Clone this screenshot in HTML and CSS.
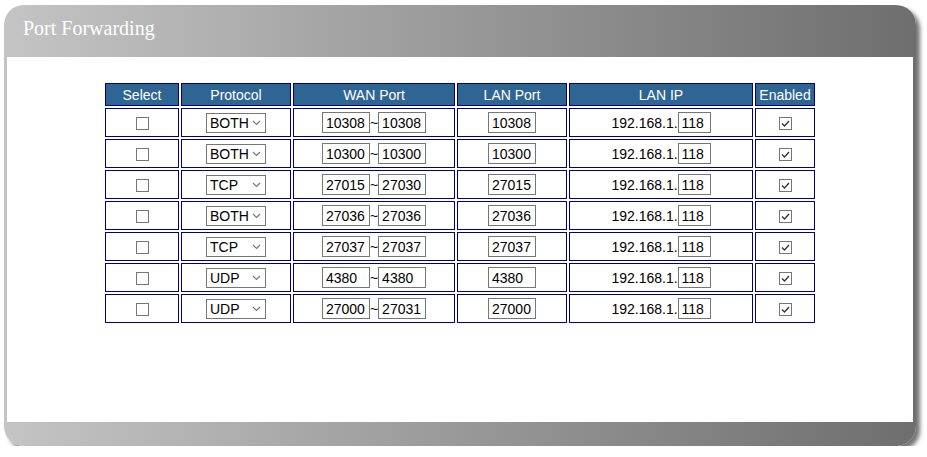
FILE: index.html
```html
<!DOCTYPE html>
<html>
<head>
    <title>Port Forwarding</title>
    <link rel="stylesheet" href="styles.css">
</head>
<body>
    <div class="panel">
        <div class="panel-head">Port Forwarding</div>
        <div class="panel-body">
            <table class="pf-table">
                <tr>
                    <th class="c-sel">Select</th>
                    <th class="c-proto">Protocol</th>
                    <th class="c-wan">WAN Port</th>
                    <th class="c-lan">LAN Port</th>
                    <th class="c-ip">LAN IP</th>
                    <th class="c-en">Enabled</th>
                </tr>
                <tr>
                    <td><span class="chk"></span></td>
                    <td><span class="sel"><select class="proto"><option>BOTH</option><option>TCP</option><option>UDP</option></select><svg class="arrow" width="9" height="6" viewBox="0 0 9 6"><path d="M1 1 L4.5 4.5 L8 1" fill="none" stroke="#777" stroke-width="1.2"/></svg></span></td>
                    <td><input class="port" value="10308">~<input class="port" value="10308"></td>
                    <td><input class="port" value="10308"></td>
                    <td>192.168.1.<input class="octet" value="118"></td>
                    <td><span class="chk"><svg width="11" height="11" viewBox="0 0 11 11"><path d="M2 5.5 L4.5 8 L9 3" fill="none" stroke="#333" stroke-width="1.3"/></svg></span></td>
                </tr>
                <tr>
                    <td><span class="chk"></span></td>
                    <td><span class="sel"><select class="proto"><option>BOTH</option><option>TCP</option><option>UDP</option></select><svg class="arrow" width="9" height="6" viewBox="0 0 9 6"><path d="M1 1 L4.5 4.5 L8 1" fill="none" stroke="#777" stroke-width="1.2"/></svg></span></td>
                    <td><input class="port" value="10300">~<input class="port" value="10300"></td>
                    <td><input class="port" value="10300"></td>
                    <td>192.168.1.<input class="octet" value="118"></td>
                    <td><span class="chk"><svg width="11" height="11" viewBox="0 0 11 11"><path d="M2 5.5 L4.5 8 L9 3" fill="none" stroke="#333" stroke-width="1.3"/></svg></span></td>
                </tr>
                <tr>
                    <td><span class="chk"></span></td>
                    <td><span class="sel"><select class="proto"><option>TCP</option><option>BOTH</option><option>UDP</option></select><svg class="arrow" width="9" height="6" viewBox="0 0 9 6"><path d="M1 1 L4.5 4.5 L8 1" fill="none" stroke="#777" stroke-width="1.2"/></svg></span></td>
                    <td><input class="port" value="27015">~<input class="port" value="27030"></td>
                    <td><input class="port" value="27015"></td>
                    <td>192.168.1.<input class="octet" value="118"></td>
                    <td><span class="chk"><svg width="11" height="11" viewBox="0 0 11 11"><path d="M2 5.5 L4.5 8 L9 3" fill="none" stroke="#333" stroke-width="1.3"/></svg></span></td>
                </tr>
                <tr>
                    <td><span class="chk"></span></td>
                    <td><span class="sel"><select class="proto"><option>BOTH</option><option>TCP</option><option>UDP</option></select><svg class="arrow" width="9" height="6" viewBox="0 0 9 6"><path d="M1 1 L4.5 4.5 L8 1" fill="none" stroke="#777" stroke-width="1.2"/></svg></span></td>
                    <td><input class="port" value="27036">~<input class="port" value="27036"></td>
                    <td><input class="port" value="27036"></td>
                    <td>192.168.1.<input class="octet" value="118"></td>
                    <td><span class="chk"><svg width="11" height="11" viewBox="0 0 11 11"><path d="M2 5.5 L4.5 8 L9 3" fill="none" stroke="#333" stroke-width="1.3"/></svg></span></td>
                </tr>
                <tr>
                    <td><span class="chk"></span></td>
                    <td><span class="sel"><select class="proto"><option>TCP</option><option>BOTH</option><option>UDP</option></select><svg class="arrow" width="9" height="6" viewBox="0 0 9 6"><path d="M1 1 L4.5 4.5 L8 1" fill="none" stroke="#777" stroke-width="1.2"/></svg></span></td>
                    <td><input class="port" value="27037">~<input class="port" value="27037"></td>
                    <td><input class="port" value="27037"></td>
                    <td>192.168.1.<input class="octet" value="118"></td>
                    <td><span class="chk"><svg width="11" height="11" viewBox="0 0 11 11"><path d="M2 5.5 L4.5 8 L9 3" fill="none" stroke="#333" stroke-width="1.3"/></svg></span></td>
                </tr>
                <tr>
                    <td><span class="chk"></span></td>
                    <td><span class="sel"><select class="proto"><option>UDP</option><option>BOTH</option><option>TCP</option></select><svg class="arrow" width="9" height="6" viewBox="0 0 9 6"><path d="M1 1 L4.5 4.5 L8 1" fill="none" stroke="#777" stroke-width="1.2"/></svg></span></td>
                    <td><input class="port" value="4380">~<input class="port" value="4380"></td>
                    <td><input class="port" value="4380"></td>
                    <td>192.168.1.<input class="octet" value="118"></td>
                    <td><span class="chk"><svg width="11" height="11" viewBox="0 0 11 11"><path d="M2 5.5 L4.5 8 L9 3" fill="none" stroke="#333" stroke-width="1.3"/></svg></span></td>
                </tr>
                <tr>
                    <td><span class="chk"></span></td>
                    <td><span class="sel"><select class="proto"><option>UDP</option><option>BOTH</option><option>TCP</option></select><svg class="arrow" width="9" height="6" viewBox="0 0 9 6"><path d="M1 1 L4.5 4.5 L8 1" fill="none" stroke="#777" stroke-width="1.2"/></svg></span></td>
                    <td><input class="port" value="27000">~<input class="port" value="27031"></td>
                    <td><input class="port" value="27000"></td>
                    <td>192.168.1.<input class="octet" value="118"></td>
                    <td><span class="chk"><svg width="11" height="11" viewBox="0 0 11 11"><path d="M2 5.5 L4.5 8 L9 3" fill="none" stroke="#333" stroke-width="1.3"/></svg></span></td>
                </tr>
            </table>
        </div>
        <div class="panel-foot"></div>
    </div>
</body>
</html>
```

FILE: styles.css
```css
body { margin: 0; background: #fff; font-family: "Liberation Sans", Arial, sans-serif; }
.panel { margin: 5px 0 0 4px; width: 912px; border-radius: 20px; background: linear-gradient(to right, #c4c4c4, #6e6e6e); box-shadow: 4px 4px 4px rgba(0,0,0,0.55); overflow: hidden; }
.panel-head { height: 52px; box-sizing: border-box; padding: 11px 0 0 19px; font-family: "Liberation Serif", "Times New Roman", serif; font-size: 20px; line-height: 24px; color: #fff; }
.panel-body { margin: 0 3px; height: 365px; background: #fff; padding-top: 24px; box-sizing: border-box; }
.panel-foot { height: 24px; }

.pf-table { margin: 0 auto; border-collapse: separate; border-spacing: 2px; table-layout: fixed; font-size: 14px; }
.pf-table th, .pf-table td { border: 1px solid #000080; padding: 0; text-align: center; box-sizing: border-box; }
.pf-table th { height: 23px; background: #2f6592; color: #fff; font-weight: normal; }
.pf-table td { height: 29px; color: #000; line-height: 17px; }
.c-sel { width: 74px; }
.c-proto { width: 110px; }
.c-wan { width: 162px; }
.c-lan { width: 110px; }
.c-ip { width: 184px; }
.c-en { width: 60px; }

.port, .octet { height: 21px; box-sizing: border-box; border: 1px solid #767676; padding: 0 3px; font-family: "Liberation Sans", Arial, sans-serif; font-size: 14px; color: #000; margin: 0; }
.port { width: 48px; }
.octet { width: 33px; }
.sel { position: relative; display: inline-block; vertical-align: middle; line-height: 0; }
.proto { appearance: none; width: 60px; height: 20px; box-sizing: border-box; border: 1px solid #767676; border-radius: 0; padding: 0 0 0 3px; margin: 0; font-family: "Liberation Sans", Arial, sans-serif; font-size: 14px; color: #000; background: #fff; }
.arrow { position: absolute; right: 5px; top: 7px; pointer-events: none; }
.chk { display: inline-block; width: 13px; height: 13px; box-sizing: border-box; border: 1px solid #767676; vertical-align: middle; line-height: 0; }
.chk svg { display: block; margin: 0; }
```
